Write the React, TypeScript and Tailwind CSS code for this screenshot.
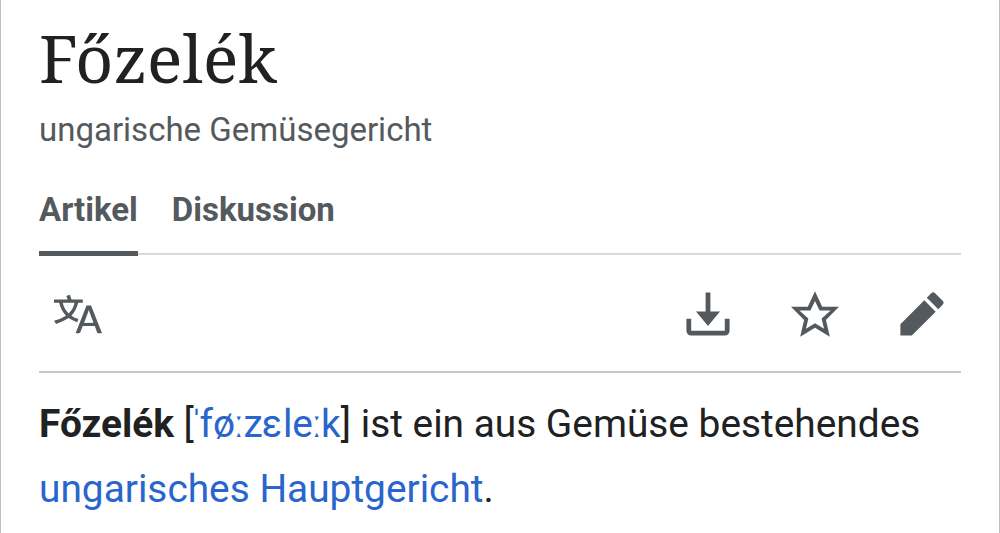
const tabs = [
    { label: "Artikel", active: true },
    { label: "Diskussion", active: false },
];

function LanguageIcon() {
    return (
        <svg viewBox="0 0 20 20" className="size-[48px]" fill="currentColor">
            <path d="M20 18h-1.44a.6.6 0 0 1-.4-.12.8.8 0 0 1-.23-.31L17 15h-5l-1 2.54a.8.8 0 0 1-.22.3.6.6 0 0 1-.4.14H9l4.55-11.47h1.89zm-3.53-4.31L14.89 9.5a12 12 0 0 1-.39-1.24q-.09.37-.19.69l-.19.56-1.58 4.19zm-6.3-1.58a13.4 13.4 0 0 1-2.91-1.41 11.46 11.46 0 0 0 2.81-5.37H12V4H7.31a4 4 0 0 0-.2-.56C6.87 2.79 6.6 2 6.6 2l-1.47.5s.4.89.6 1.5H0v1.33h2.15A11.23 11.23 0 0 0 5 10.7a17.2 17.2 0 0 1-5 2.1q.56.82.87 1.38a23.3 23.3 0 0 0 5.22-2.51 15.6 15.6 0 0 0 3.56 1.77zM3.63 5.33h4.91a8.1 8.1 0 0 1-2.45 4.45 9.1 9.1 0 0 1-2.46-4.45" />
        </svg>
    );
}

function DownloadIcon() {
    return (
        <svg viewBox="0 0 20 20" className="size-[48px]" fill="currentColor">
            <path d="M17 12v5H3v-5H1v5a2 2 0 0 0 2 2h14a2 2 0 0 0 2-2v-5z" />
            <path d="M10 15l5-6h-4V1H9v8H5z" />
        </svg>
    );
}

function StarIcon() {
    return (
        <svg viewBox="0 0 20 20" className="size-[48px]" fill="currentColor">
            <path d="M20 7h-7L10 .5 7 7H0l5.46 5.47-1.64 7 6.18-3.7 6.18 3.73-1.63-7zm-10 6.9-3.76 2.27 1-4.28L3.5 8.5h4.61L10 4.6l1.9 3.9h4.6l-3.73 3.4 1 4.28z" />
        </svg>
    );
}

function EditIcon() {
    return (
        <svg viewBox="0 0 20 20" className="size-[48px]" fill="currentColor">
            <path d="m16.77 8 1.94-2a1 1 0 0 0 0-1.41l-3.34-3.3a1 1 0 0 0-1.41 0L12 3.23zM1 14.25V19h4.75l9.96-9.96-4.75-4.75z" />
        </svg>
    );
}

function Pronunciation() {
    return (
        <a className="text-[#2965cc]">
            <span className="-mr-[3.6px] -ml-[3.8px]">ˈ</span>fø<span className="-mr-[0.6px] -ml-[1.7px]">ː</span>z
            <span className="mr-[0.6px] -ml-[1.3px] font-['Inter',sans-serif] leading-none">ɛ</span>le
            <span className="-mr-[1px] -ml-[1.6px]">ː</span>k
        </a>
    );
}

export default function App() {
    return (
        <div className="h-[533px] w-[1000px] overflow-hidden border-x border-[#c0c0c0] bg-white px-[38px] font-['Roboto',sans-serif] text-[#202122]">
            <header>
                <h1 className="pt-[15px] font-['Noto_Serif','Liberation_Serif',serif] text-[66px] leading-[84px]">Főzelék</h1>
                <p className="mt-[11px] text-[33px] leading-10 text-[#54595d]">ungarische Gemüsegericht</p>
            </header>

            <nav className="mt-9 flex h-[69px] gap-[34px] border-b-2 border-[#dadada] text-[33px] leading-[48px] font-bold text-[#54595d]">
                {tabs.map((tab) => (
                    <a key={tab.label} className={tab.active ? "h-[70px] border-b-5 border-[#54595d]" : "h-[70px]"}>
                        {tab.label}
                    </a>
                ))}
            </nav>

            <div className="flex h-[118px] items-center border-b-2 border-[#c8c8c8] pt-px pr-[15px] pl-[15px] text-[#54595d]">
                <LanguageIcon />
                <div className="ml-auto flex gap-[59px]">
                    <DownloadIcon />
                    <StarIcon />
                    <EditIcon />
                </div>
            </div>

            <p className="pt-[18px] text-[38.85px] leading-[65px]">
                <b>Főzelék</b> [<Pronunciation />] ist ein aus Gemüse bestehendes{" "}
                <a className="text-[#2965cc]">ungarisches Hauptgericht</a>.
            </p>
        </div>
    );
}
